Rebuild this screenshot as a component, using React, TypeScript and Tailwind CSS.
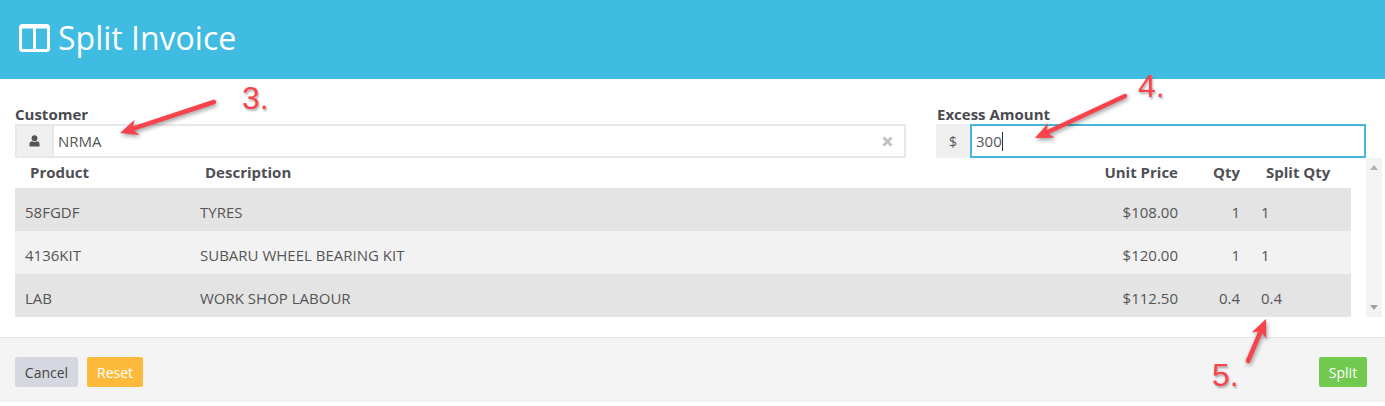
const rows = [
  { code: "58FGDF", desc: "TYRES", price: "$108.00", qty: "1", split: "1", bg: "bg-[#e4e4e4]" },
  { code: "4136KIT", desc: "SUBARU WHEEL BEARING KIT", price: "$120.00", qty: "1", split: "1", bg: "bg-[#f2f2f2]" },
  { code: "LAB", desc: "WORK SHOP LABOUR", price: "$112.50", qty: "0.4", split: "0.4", bg: "bg-[#e4e4e4]" },
];

const Arrow = ({ x1, y1, x2, y2 }: { x1: number; y1: number; x2: number; y2: number }) => {
  const a = Math.atan2(y2 - y1, x2 - x1);
  const len = 18;
  const wing = 8;
  const bx = x2 - len * Math.cos(a);
  const by = y2 - len * Math.sin(a);
  const mx = x2 - (len - 5) * Math.cos(a);
  const my = y2 - (len - 5) * Math.sin(a);
  const nx = -Math.sin(a);
  const ny = Math.cos(a);
  return (
    <g>
      <line x1={x1} y1={y1} x2={mx} y2={my} stroke="#f9434c" strokeWidth={4.5} strokeLinecap="round" />
      <polygon points={`${x2},${y2} ${bx + nx * wing},${by + ny * wing} ${mx},${my} ${bx - nx * wing},${by - ny * wing}`} fill="#f9434c" />
    </g>
  );
};

export default function App() {
  return (
    <div className="relative h-[406px] w-[1385px] overflow-hidden bg-white font-['Open_Sans',sans-serif] text-[15px] text-[#555]">
      <header className="flex h-[79px] items-center bg-[#40bbe2] pb-[4px] pl-[19px] text-white">
        <svg width="31" height="28" viewBox="0 0 31 28" fill="none" stroke="white" strokeWidth="3">
          <rect x="1.5" y="1.5" width="28" height="25" rx="2" />
          <line x1="2" y1="3" x2="29" y2="3" strokeWidth="3" />
          <line x1="15.5" y1="2" x2="15.5" y2="26" />
        </svg>
        <h1 className="ml-[8px] text-[32px] leading-none font-normal">Split Invoice</h1>
      </header>

      <div className="flex h-[79px] gap-[30px] pt-[26px] pr-[19px] pl-[15px]">
        <div className="w-[891px]">
          <label className="block h-[19px] text-[15px] leading-[19px] font-bold text-[#4a4a50]">Customer</label>
          <div className="flex h-[34px]">
            <span className="flex w-[37px] items-center justify-center border-y-2 border-l-2 border-[#e8e8e8] bg-[#efefef]">
              <svg width="11" height="12" viewBox="0 0 12 13" fill="#555">
                <circle cx="6" cy="3.4" r="3.1" />
                <path d="M0.5 12.5v-2.6c0-2 1.6-3.2 3-3.2 1.4 1 3.6 1 5 0 1.4 0 3 1.2 3 3.2v2.6z" />
              </svg>
            </span>
            <div className="flex flex-1 items-center justify-between border-2 border-[#e8e8e8] pr-[11px] pl-[4px] text-[15px] text-[#555]">
              <span>NRMA</span>
              <svg width="11" height="11" viewBox="0 0 11 11" stroke="#c2c2c2" strokeWidth="3">
                <path d="M1.5 1.5l8 8M9.5 1.5l-8 8" />
              </svg>
            </div>
          </div>
        </div>
        <div className="w-[430px]">
          <label className="block h-[19px] pl-px text-[15px] leading-[19px] font-bold text-[#4a4a50]">Excess Amount</label>
          <div className="flex h-[34px]">
            <span className="flex w-[34px] items-center justify-center bg-[#efefef] text-[14px]">$</span>
            <div className="flex flex-1 items-center border-2 border-[#4ab6d6] pl-[4px] text-[15px] text-[#555]">
              <span>300</span>
              <span className="h-[19px] w-px bg-[#333]" />
            </div>
          </div>
        </div>
      </div>

      <div className="flex h-[159px] pl-[15px]">
        <div className="w-[1336px]">
          <div className="grid h-[30px] grid-cols-[190px_175px_1fr_100px_62px_111px] items-center pb-[1px] font-bold text-[#4f4f55]">
            <span className="pl-[15px]">Product</span>
            <span>Description</span>
            <span />
            <span className="text-right">Unit Price</span>
            <span className="text-right">Qty</span>
            <span className="pl-[26px] whitespace-nowrap">Split Qty</span>
          </div>
          <div className="flex flex-col">
            {rows.map((row) => (
              <div key={row.code} className={`grid h-[43px] grid-cols-[185px_180px_1fr_100px_62px_111px] items-center pt-[6px] ${row.bg}`}>
                <span className="pl-[10px]">{row.code}</span>
                <span className="whitespace-nowrap">{row.desc}</span>
                <span />
                <span className="text-right">{row.price}</span>
                <span className="text-right">{row.qty}</span>
                <span className="pl-[21px]">{row.split}</span>
              </div>
            ))}
          </div>
        </div>
        <div className="ml-[15px] flex h-[159px] w-[16px] flex-col items-center justify-between bg-[#f3f3f3] py-[7px]">
          <span className="h-0 w-0 border-x-[4px] border-b-[5px] border-x-transparent border-b-[#b0b0b0]" />
          <span className="h-0 w-0 border-x-[4px] border-t-[5px] border-x-transparent border-t-[#a0a0a0]" />
        </div>
      </div>

      <footer className="mt-[20px] flex h-[65px] items-center justify-between border-t border-[#e6e6e6] bg-[#f4f4f4] pt-[4px] pr-[18px] pl-[15px]">
        <div className="flex gap-[9px]">
          <button className="h-[30px] w-[63px] rounded-[2px] bg-[#d5d8e0] text-[14px] text-[#444]">Cancel</button>
          <button className="h-[30px] w-[56px] rounded-[2px] bg-[#fdb93a] text-[14px] text-white">Reset</button>
        </div>
        <button className="h-[30px] w-[48px] rounded-[2px] bg-[#71c94f] text-[14px] text-white">Split</button>
      </footer>

      {/* screenshot annotations */}
      <svg className="pointer-events-none absolute top-0 left-0 [filter:drop-shadow(1px_2px_2px_rgba(0,0,0,0.4))]" width="1385" height="406">
        <Arrow x1={214} y1={102} x2={120} y2={133} />
        <Arrow x1={1125} y1={96} x2={1035} y2={138} />
        <Arrow x1={1248} y1={361} x2={1266} y2={319} />
      </svg>
      <span className="absolute top-[74px] left-[242px] font-['Liberation_Sans',sans-serif] text-[32px] text-[#f9434c] [text-shadow:1px_2px_2px_rgba(0,0,0,0.3)]">3.</span>
      <span className="absolute top-[62px] left-[1138px] font-['Liberation_Sans',sans-serif] text-[32px] text-[#f9434c] [text-shadow:1px_2px_2px_rgba(0,0,0,0.3)]">4.</span>
      <span className="absolute top-[351px] left-[1212px] font-['Liberation_Sans',sans-serif] text-[32px] text-[#f9434c] [text-shadow:1px_2px_2px_rgba(0,0,0,0.3)]">5.</span>
    </div>
  );
}
